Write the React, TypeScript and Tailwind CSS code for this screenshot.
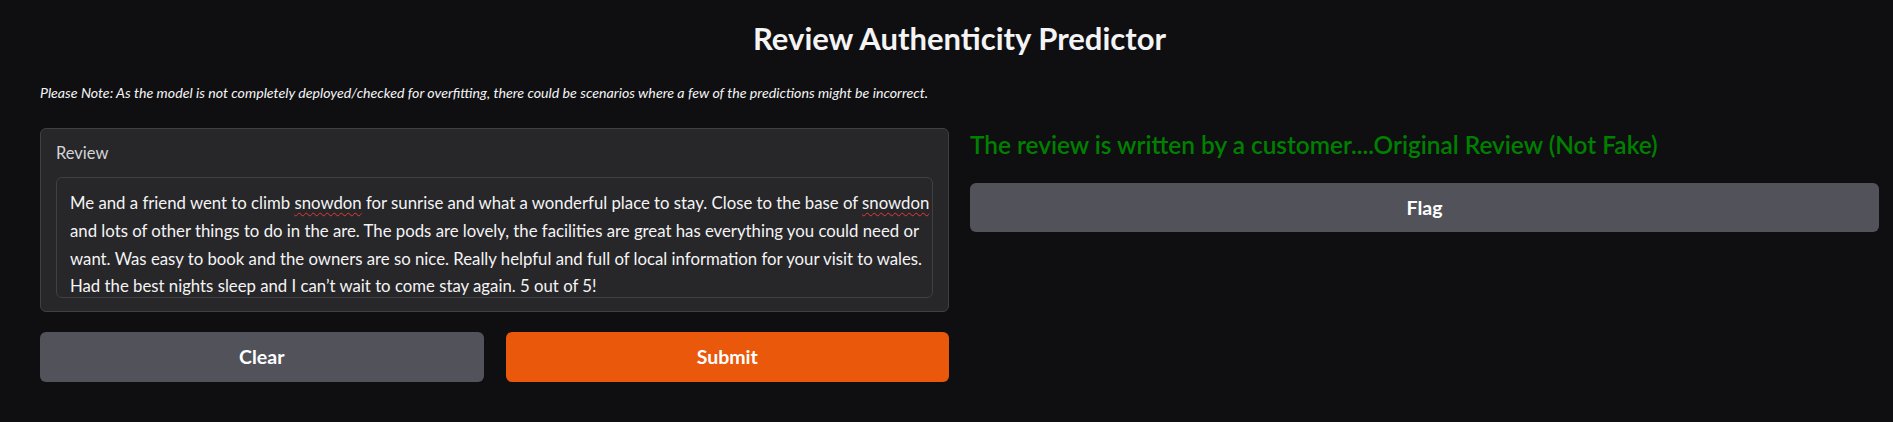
import React from "react";

const font = { fontFamily: "Lato, 'Noto Sans', sans-serif" };

function Squiggle({ children }: { children: React.ReactNode }) {
  return (
    <span className="underline decoration-wavy decoration-[#e53935] decoration-1 underline-offset-[3px]">
      {children}
    </span>
  );
}

export default function App() {
  return (
    <div
      className="min-h-screen w-full bg-[#0f0f11] pl-[40px] pr-[14px] text-[#e4e4e7]"
      style={font}
    >
      <h1 className="pt-[18px] text-center text-[31px] font-bold leading-[40px] text-[#f4f4f5]">
        Review Authenticity Predictor
      </h1>
      <p className="mt-[26px] text-[14.2px] italic leading-[18px] text-[#f4f4f5]">
        Please Note: As the model is not completely deployed/checked for overfitting, there could be scenarios where a few of the predictions might be incorrect.
      </p>
      <div className="mt-[26px] flex gap-[21px]">
        <div className="flex w-[909px] flex-col gap-[20px]">
          <div className="h-[184px] rounded-[6px] border border-[#3f3f46] bg-[#27272a] px-[15px] pt-[14px]">
            <div className="text-[16.5px] leading-[20px] text-[#d4d4d8]">Review</div>
            <div className="mt-[14px] h-[121px] rounded-[6px] border border-[#3f3f46] bg-[#27272a] px-[13px] pt-[11px] text-[16.75px] leading-[27.8px] text-[#f4f4f5]">
              <div className="whitespace-nowrap">
                Me and a friend went to climb <Squiggle>snowdon</Squiggle> for sunrise and what a wonderful place to stay. Close to the base of <Squiggle>snowdon</Squiggle>
              </div>
              <div className="whitespace-nowrap">
                and lots of other things to do in the are. The pods are lovely, the facilities are great has everything you could need or
              </div>
              <div className="whitespace-nowrap">
                want. Was easy to book and the owners are so nice. Really helpful and full of local information for your visit to wales.
              </div>
              <div className="whitespace-nowrap">
                Had the best nights sleep and I can’t wait to come stay again. 5 out of 5!
              </div>
            </div>
          </div>
          <div className="flex gap-[22px]">
            <button className="h-[50px] flex-1 rounded-[6px] bg-[#52525b] text-[19.5px] font-bold text-white">
              Clear
            </button>
            <button className="h-[50px] flex-1 rounded-[6px] bg-[#ea580c] text-[19.5px] font-bold text-white">
              Submit
            </button>
          </div>
        </div>
        <div className="flex w-[909px] flex-col">
          <div className="pt-[2px] text-[24.4px] font-semibold leading-[30px] text-[#008000]">
            The review is written by a customer....Original Review (Not Fake)
          </div>
          <button className="mt-[23px] h-[49px] w-full rounded-[6px] bg-[#52525b] text-[19.5px] font-bold text-white">
            Flag
          </button>
        </div>
      </div>
    </div>
  );
}
